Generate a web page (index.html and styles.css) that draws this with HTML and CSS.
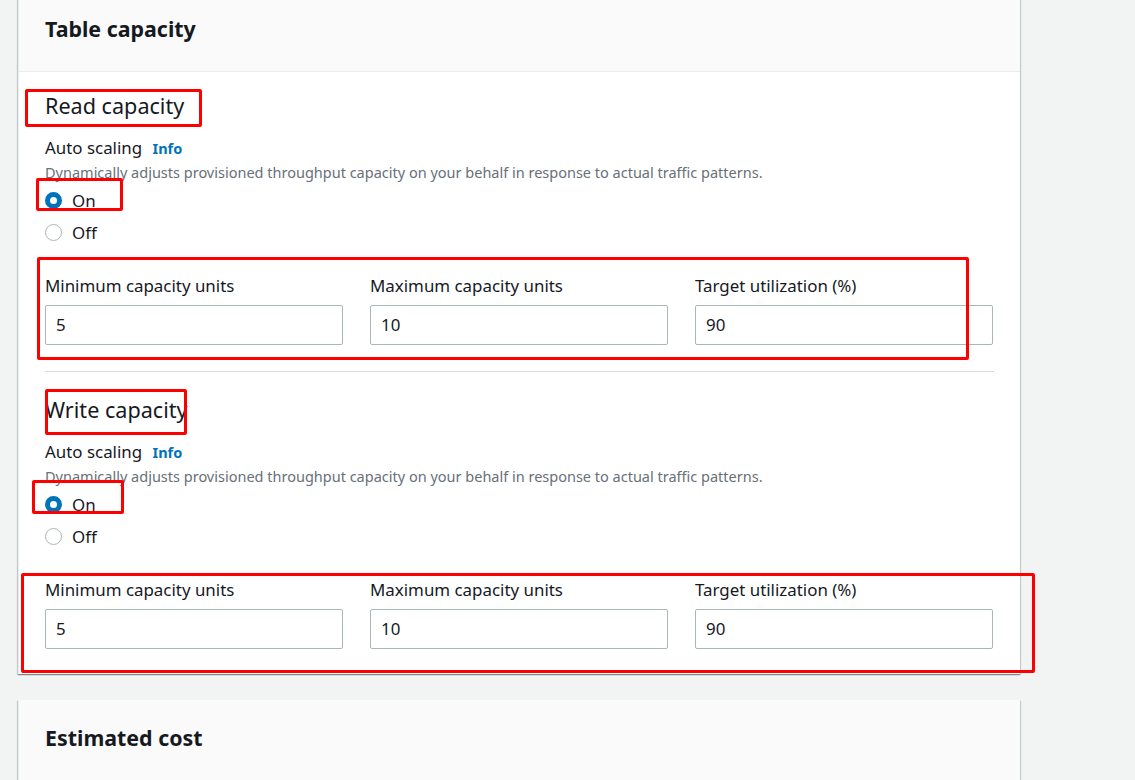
FILE: index.html
```html
<!DOCTYPE html>
<html lang="en">
<head>
<meta charset="utf-8">
<title>Table capacity</title>
<link rel="stylesheet" href="styles.css">
</head>
<body>
<main class="page">
  <section class="card card-first">
    <header class="card-header"><h2 class="card-title">Table capacity</h2></header>
    <div class="card-body">
      <div class="group">
        <h3 class="group-title">Read capacity</h3>
        <div class="field-label">Auto scaling <a class="info" href="#">Info</a></div>
        <p class="desc">Dynamically adjusts provisioned throughput capacity on your behalf in response to actual traffic patterns.</p>
        <div class="radios">
          <label class="radio"><span class="dot checked"></span><span>On</span></label>
          <label class="radio"><span class="dot"></span><span>Off</span></label>
        </div>
        <div class="cols">
          <div class="col"><div class="col-label">Minimum capacity units</div><div class="input">5</div></div>
          <div class="col"><div class="col-label">Maximum capacity units</div><div class="input">10</div></div>
          <div class="col"><div class="col-label">Target utilization (%)</div><div class="input">90</div></div>
        </div>
      </div>
      <hr class="divider">
      <div class="group">
        <h3 class="group-title">Write capacity</h3>
        <div class="field-label">Auto scaling <a class="info" href="#">Info</a></div>
        <p class="desc">Dynamically adjusts provisioned throughput capacity on your behalf in response to actual traffic patterns.</p>
        <div class="radios">
          <label class="radio"><span class="dot checked"></span><span>On</span></label>
          <label class="radio"><span class="dot"></span><span>Off</span></label>
        </div>
        <div class="cols">
          <div class="col"><div class="col-label">Minimum capacity units</div><div class="input">5</div></div>
          <div class="col"><div class="col-label">Maximum capacity units</div><div class="input">10</div></div>
          <div class="col"><div class="col-label">Target utilization (%)</div><div class="input">90</div></div>
        </div>
      </div>
    </div>
  </section>
  <section class="card">
    <header class="card-header"><h2 class="card-title">Estimated cost</h2></header>
    <div class="card-body tall"></div>
  </section>
</main>
<div class="marks" aria-hidden="true">
  <div class="mark m1"></div>
  <div class="mark m2"></div>
  <div class="mark m3"></div>
  <div class="mark m4"></div>
  <div class="mark m5"></div>
  <div class="mark m6"></div>
</div>
</body>
</html>
```
FILE: styles.css
```css
* { box-sizing: border-box; }
html, body { margin: 0; padding: 0; }
body {
  background: #f2f3f3;
  font-family: "Noto Sans", "Open Sans", "Liberation Sans", sans-serif;
  color: #16191f;
  position: relative;
  height: 780px;
  overflow: hidden;
}
.page {
  display: flex;
  flex-direction: column;
  gap: 26px;
  padding-left: 18px;
  width: 1020px;
}
.card {
  background: #fff;
  border-left: 1px solid #eaeded;
  box-shadow: 0 1px 1px 0 rgba(0,28,36,.3), 1px 1px 1px 0 rgba(0,28,36,.15), -1px 1px 1px 0 rgba(0,28,36,.15);
}
.card-first { margin-top: -9px; }
.card-header {
  background: #fafafa;
  border-bottom: 1px solid #eaeded;
  padding: 26px 26px 30px;
}
.card-title {
  margin: 0;
  font-size: 21.4px;
  line-height: 24px;
  font-weight: 700;
}
.card-body { padding: 21px 26px 25px; }
.card-body.tall { height: 100px; }
.group { display: flex; flex-direction: column; }
.group-title {
  margin: 0;
  font-size: 21.6px;
  line-height: 24px;
  font-weight: 400;
  padding-top: 1px;
}
.field-label {
  margin-top: 19px;
  font-size: 16.9px;
  line-height: 22px;
}
.info {
  color: #0073bb;
  font-size: 14.5px;
  font-weight: 700;
  text-decoration: none;
  margin-left: 6px;
}
.desc {
  margin: 3px 0 0;
  font-size: 14.5px;
  line-height: 20px;
  color: #687078;
}
.radios {
  display: flex;
  flex-direction: column;
  gap: 8px;
  margin-top: 6px;
}
.radio {
  display: flex;
  align-items: center;
  gap: 10px;
  height: 24px;
  font-size: 16.9px;
}
.dot {
  width: 17px;
  height: 17px;
  border-radius: 50%;
  border: 1.5px solid #aab7b8;
  background: #fff;
}
.dot.checked {
  border: 5px solid #0073bb;
}
.cols {
  display: grid;
  grid-template-columns: repeat(3, 298px);
  column-gap: 27px;
  margin-top: 31px;
}
.col-label {
  font-size: 16.9px;
  line-height: 22px;
}
.input {
  margin-top: 8px;
  height: 40px;
  border: 1px solid #aab7b8;
  border-radius: 2px;
  padding: 0 10px;
  font-size: 16.9px;
  line-height: 38px;
  background: #fff;
}
.divider {
  border: 0;
  border-top: 1px solid #d5dbdb;
  margin: 26px 0 25px;
}
.marks { position: absolute; inset: 0; pointer-events: none; }
.mark {
  position: absolute;
  border: 3px solid #ff0000;
  border-radius: 2px;
}
.m1 { left: 25px; top: 89px; width: 177px; height: 38px; }
.m2 { left: 36px; top: 178px; width: 87px; height: 33px; }
.m3 { left: 37px; top: 257px; width: 932px; height: 103px; }
.m4 { left: 45px; top: 389px; width: 142px; height: 46px; }
.m5 { left: 32px; top: 480px; width: 92px; height: 34px; }
.m6 { left: 21px; top: 573px; width: 1014px; height: 100px; }
```
